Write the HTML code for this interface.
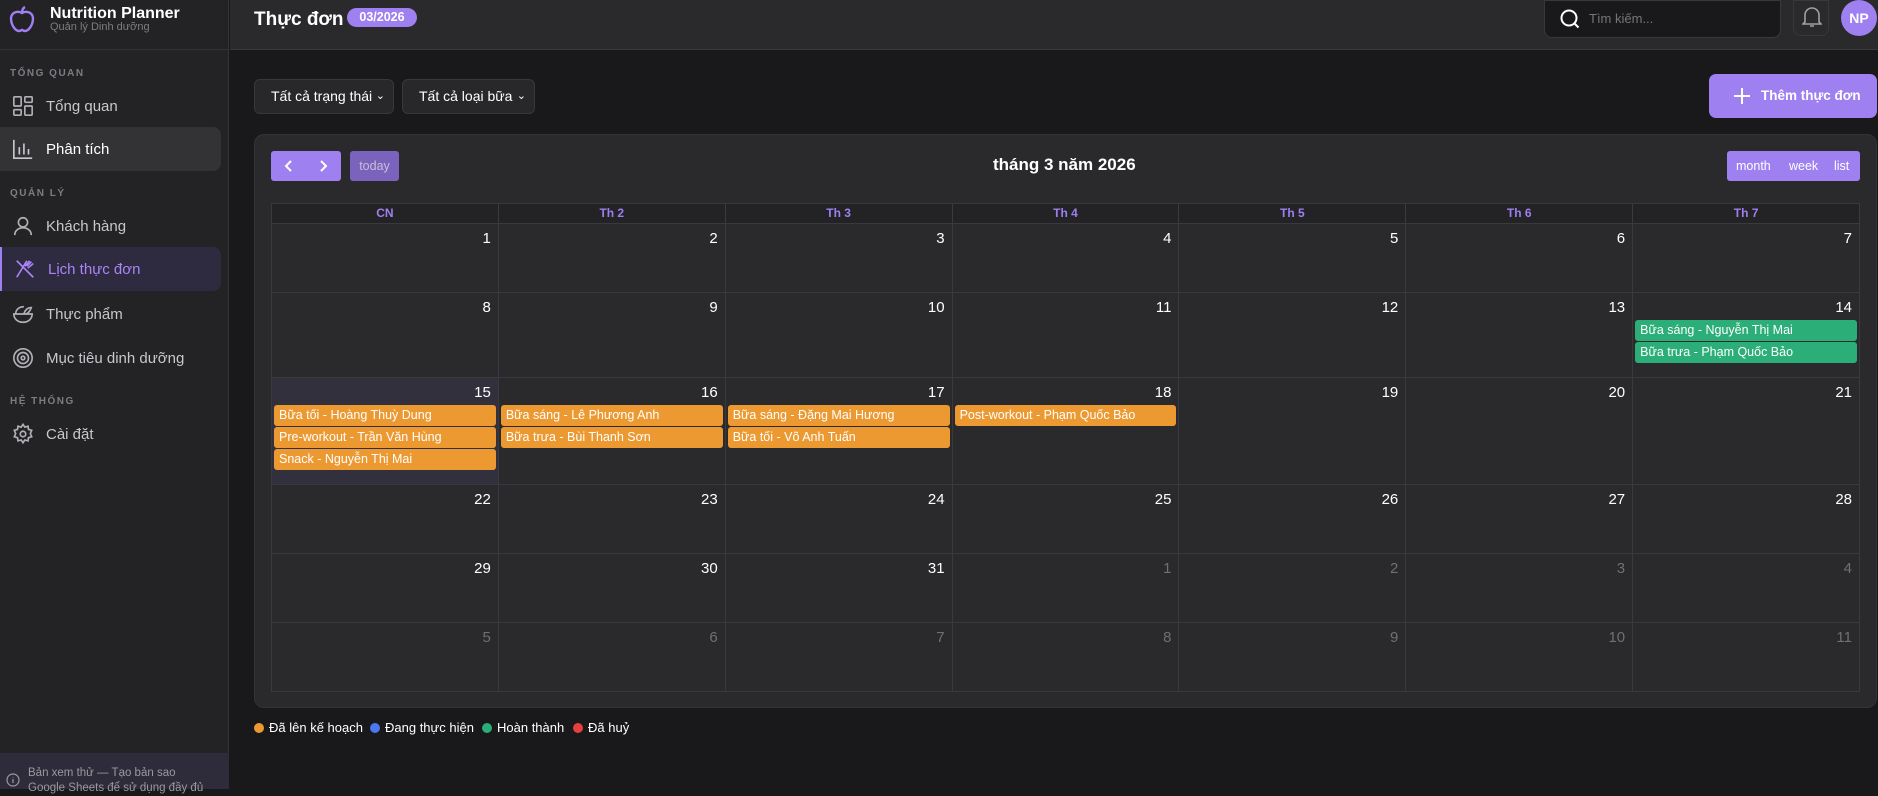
<!DOCTYPE html>
<html><head><meta charset="utf-8">
<style>
*{box-sizing:border-box;margin:0;padding:0}
body{width:1878px;height:789px;background:#19191b;font-family:"Liberation Sans","Noto Sans CJK SC",sans-serif;color:#fff;position:relative;overflow:hidden}
.side{position:absolute;left:0;top:0;width:229px;height:789px;background:#232326;border-right:1px solid #333336}
.logo{position:absolute;left:0;top:0;width:229px;height:50px;border-bottom:1px solid #333336}
.sec{position:absolute;left:10px;font-size:10px;letter-spacing:1.5px;color:#7c7c82;font-weight:bold}
.item{position:absolute;left:0;width:221px;height:44px;display:flex;align-items:center;padding-left:12px;font-size:15px;color:#c7c7cc;border-radius:0 8px 8px 0}
.item svg{width:22px;height:22px;margin-right:12px;flex:none}
.header{position:absolute;left:230px;top:0;right:0;height:50px;background:#2a2a2d;border-bottom:1px solid #38383b}
.sel{position:absolute;top:79px;height:35px;background:#28282b;border:1px solid #38383b;border-radius:6px;font-size:14px;padding-left:16px;line-height:33px}
.card{position:absolute;left:254px;top:134px;width:1623px;height:574px;background:#2a2a2d;border:1px solid #343437;border-radius:10px}
.grid{position:absolute;left:271px;top:203px;width:1589px;height:489px;display:grid;grid-template-columns:repeat(7,1fr);grid-template-rows:19px 68px 84px 106px 68px 68px 68px;gap:1px;background:#3a3a3e;border:1px solid #3a3a3e}
.grid>div{background:#2a2a2d;position:relative}
.hd{background:#232326!important;color:#9d7ff0;font-weight:bold;font-size:12px;text-align:center;line-height:19px}
.d{position:absolute;right:7px;top:6px;font-size:15px}
.m{color:#6f6f74}
.ev{position:absolute;left:2px;right:2px;height:21px;border-radius:3px;background:#ec9932;font-size:12.5px;line-height:21px;padding-left:5px;white-space:nowrap;overflow:hidden}
.g{background:#2bae78}
.e1{top:27px}.e2{top:49px}.e3{top:71px}
.btn{position:absolute;background:#9e80f0;border-radius:3px}
.leg{position:absolute;top:720px;font-size:13px;display:flex;align-items:center}
.leg i{width:10px;height:10px;border-radius:50%;display:inline-block;margin-right:5px}
</style></head><body>
<div class="side">
 <div class="logo">
  <svg style="position:absolute;left:7px;top:4px" width="30" height="30" viewBox="0 0 30 30" fill="none" stroke="#a07ff2" stroke-width="2.4"><path d="M15 9c-3-2-10-2-11 5 0 8 5 13 8 13 2 0 2-1 3-1s1 1 3 1c3 0 8-5 8-13-1-7-8-7-11-5z"/><path d="M15 9c0-3 1-5 3-6"/></svg>
  <div style="position:absolute;left:50px;top:5px;font-size:16px;font-weight:bold">Nutrition Planner</div>
  <div style="position:absolute;left:50px;top:21px;font-size:11px;color:#7c7c82">Quản lý Dinh dưỡng</div>
 </div>
 <div class="sec" style="top:68px">TỔNG QUAN</div>
 <div class="item" style="top:84px"><svg viewBox="0 0 24 24" fill="none" stroke="#b0b0b5" stroke-width="1.8"><rect x="2" y="2" width="8" height="10" rx="1"/><rect x="14" y="2" width="8" height="6" rx="1"/><rect x="2" y="16" width="8" height="6" rx="1"/><rect x="14" y="12" width="8" height="10" rx="1"/></svg>Tổng quan</div>
 <div class="item" style="top:127px;background:#333336;color:#fff"><svg viewBox="0 0 24 24" fill="none" stroke="#c7c7cc" stroke-width="1.8"><path d="M2 2v20h20M8 10v8M13 6v12M18 12v6"/></svg>Phân tích</div>
 <div class="sec" style="top:188px">QUẢN LÝ</div>
 <div class="item" style="top:204px"><svg viewBox="0 0 24 24" fill="none" stroke="#b0b0b5" stroke-width="1.8"><circle cx="12" cy="8" r="5"/><path d="M3 22c0-5 4-8 9-8s9 3 9 8"/></svg>Khách hàng</div>
 <div class="item" style="top:247px;background:#2e2a40;color:#a985f5;border-left:2px solid #9e80f0;padding-left:12px"><svg viewBox="0 0 24 24" fill="none" stroke="#a985f5" stroke-width="1.8"><path d="M3 3l18 18M14 3l-11 18M17 3l-5 6M21 6l-6 5M19 4l-5 5"/></svg>Lịch thực đơn</div>
 <div class="item" style="top:292px"><svg viewBox="0 0 24 24" fill="none" stroke="#b0b0b5" stroke-width="1.8"><path d="M2 12h20c0 5-4 9-10 9S2 17 2 12zM4 12c0-5 4-8 9-8M13 12c1-4 4-7 8-7-1 3-3 6-6 7"/></svg>Thực phẩm</div>
 <div class="item" style="top:336px"><svg viewBox="0 0 24 24" fill="none" stroke="#b0b0b5" stroke-width="1.8"><circle cx="12" cy="12" r="10"/><circle cx="12" cy="12" r="6"/><circle cx="12" cy="12" r="2"/></svg>Mục tiêu dinh dưỡng</div>
 <div class="sec" style="top:396px">HỆ THỐNG</div>
 <div class="item" style="top:412px"><svg viewBox="0 0 24 24" fill="none" stroke="#b0b0b5" stroke-width="1.8"><circle cx="12" cy="12" r="3"/><path d="M12 1.5l2 3 3.5-1 .5 3.5 3.5 1-1.5 3.5 1.5 3.5-3.5 1-.5 3.5-3.5-1-2 3-2-3-3.5 1-.5-3.5-3.5-1 1.5-3.5-1.5-3.5 3.5-1 .5-3.5 3.5 1z"/></svg>Cài đặt</div>
 <div style="position:absolute;left:0;top:753px;width:229px;height:36px;background:#2e2b3a"></div>
 <svg style="position:absolute;left:6px;top:773px" width="14" height="14" viewBox="0 0 14 14" fill="none" stroke="#9a9aa0" stroke-width="1.2"><circle cx="7" cy="7" r="6"/><path d="M7 6v4M7 4v.5"/></svg>
 <div style="position:absolute;left:28px;top:766px;font-size:11.5px;color:#9a9aa0;line-height:15px">Bản xem thử — Tạo bản sao<br>Google Sheets để sử dụng đầy đủ</div>
</div>
<div class="header">
 <div style="position:absolute;left:24px;top:9px;font-size:19px;font-weight:bold">Thực đơn</div>
 <div style="position:absolute;left:117px;top:8px;width:70px;height:19px;background:#9e80f0;border-radius:10px;font-size:12.5px;font-weight:bold;text-align:center;line-height:19px">03/2026</div>
 <div style="position:absolute;left:1314px;top:0;width:237px;height:38px;background:#19191b;border:1px solid #38383b;border-radius:0 0 8px 8px">
  <svg style="position:absolute;left:14px;top:7px" width="22" height="22" viewBox="0 0 22 22" fill="none" stroke="#fff" stroke-width="2"><circle cx="10" cy="10" r="7.5"/><path d="M15.5 15.5l4 4"/></svg>
  <div style="position:absolute;left:44px;top:10px;font-size:13px;color:#75757a">Tìm kiếm...</div>
 </div>
 <div style="position:absolute;left:1563px;top:0;width:36px;height:36px;border:1px solid #38383b;border-radius:0 0 8px 8px">
  <svg style="position:absolute;left:8px;top:4px" width="20" height="24" viewBox="0 0 20 24" fill="none" stroke="#a0a0a5" stroke-width="1.6"><path d="M3 17V10a7 7 0 0114 0v7l2 2H1z M8 21h4"/></svg>
 </div>
 <div style="position:absolute;left:1611px;top:0;width:36px;height:36px;border-radius:50%;background:#9e80f0;font-weight:bold;font-size:14px;text-align:center;line-height:36px">NP</div>
</div>
<div class="sel" style="left:254px;width:140px">Tất cả trạng thái <span style="position:absolute;right:8px;font-size:11px">&#8964;</span></div>
<div class="sel" style="left:402px;width:133px">Tất cả loại bữa <span style="position:absolute;right:8px;font-size:11px">&#8964;</span></div>
<div class="btn" style="left:1709px;top:74px;width:168px;height:44px;border-radius:7px;font-size:13.5px;font-weight:bold;line-height:44px;padding-left:52px">Thêm thực đơn
 <svg style="position:absolute;left:23px;top:12px" width="20" height="20" viewBox="0 0 20 20" stroke="#fff" stroke-width="2"><path d="M10 2v16M2 10h16"/></svg></div>
<div class="card"></div>
<div class="btn" style="left:271px;top:151px;width:70px;height:30px">
 <svg style="position:absolute;left:12px;top:8px" width="46" height="14" viewBox="0 0 46 14" fill="none" stroke="#fff" stroke-width="2"><path d="M8 2L3 7l5 5M38 2l5 5-5 5"/></svg></div>
<div class="btn" style="left:350px;top:151px;width:49px;height:30px;background:#7b62bd;color:#c6c0d8;font-size:12.5px;text-align:center;line-height:30px">today</div>
<div style="position:absolute;left:993px;top:155px;font-size:17px;font-weight:bold">tháng 3 năm 2026</div>
<div class="btn" style="left:1727px;top:151px;width:133px;height:30px;font-size:12.5px;line-height:30px"><span style="position:absolute;left:9px">month</span><span style="position:absolute;left:62px">week</span><span style="position:absolute;left:107px">list</span></div>
<div class="grid">
 <div class="hd">CN</div><div class="hd">Th 2</div><div class="hd">Th 3</div><div class="hd">Th 4</div><div class="hd">Th 5</div><div class="hd">Th 6</div><div class="hd">Th 7</div>
 <div><span class="d">1</span></div><div><span class="d">2</span></div><div><span class="d">3</span></div><div><span class="d">4</span></div><div><span class="d">5</span></div><div><span class="d">6</span></div><div><span class="d">7</span></div>
 <div><span class="d">8</span></div><div><span class="d">9</span></div><div><span class="d">10</span></div><div><span class="d">11</span></div><div><span class="d">12</span></div><div><span class="d">13</span></div>
 <div><span class="d">14</span><div class="ev g e1">Bữa sáng - Nguyễn Thị Mai</div><div class="ev g e2">Bữa trưa - Phạm Quốc Bảo</div></div>
 <div style="background:#32303d"><span class="d">15</span><div class="ev e1">Bữa tối - Hoàng Thuỳ Dung</div><div class="ev e2">Pre-workout - Trần Văn Hùng</div><div class="ev e3">Snack - Nguyễn Thị Mai</div></div>
 <div><span class="d">16</span><div class="ev e1">Bữa sáng - Lê Phương Anh</div><div class="ev e2">Bữa trưa - Bùi Thanh Sơn</div></div>
 <div><span class="d">17</span><div class="ev e1">Bữa sáng - Đặng Mai Hương</div><div class="ev e2">Bữa tối - Võ Anh Tuấn</div></div>
 <div><span class="d">18</span><div class="ev e1">Post-workout - Phạm Quốc Bảo</div></div>
 <div><span class="d">19</span></div><div><span class="d">20</span></div><div><span class="d">21</span></div>
 <div><span class="d">22</span></div><div><span class="d">23</span></div><div><span class="d">24</span></div><div><span class="d">25</span></div><div><span class="d">26</span></div><div><span class="d">27</span></div><div><span class="d">28</span></div>
 <div><span class="d">29</span></div><div><span class="d">30</span></div><div><span class="d">31</span></div><div><span class="d m">1</span></div><div><span class="d m">2</span></div><div><span class="d m">3</span></div><div><span class="d m">4</span></div>
 <div><span class="d m">5</span></div><div><span class="d m">6</span></div><div><span class="d m">7</span></div><div><span class="d m">8</span></div><div><span class="d m">9</span></div><div><span class="d m">10</span></div><div><span class="d m">11</span></div>
</div>
<div class="leg" style="left:254px"><i style="background:#ec9932"></i>Đã lên kế hoạch</div>
<div class="leg" style="left:370px"><i style="background:#4a78ee"></i>Đang thực hiện</div>
<div class="leg" style="left:482px"><i style="background:#2bae78"></i>Hoàn thành</div>
<div class="leg" style="left:573px"><i style="background:#e5403e"></i>Đã huỷ</div>
</body></html>
